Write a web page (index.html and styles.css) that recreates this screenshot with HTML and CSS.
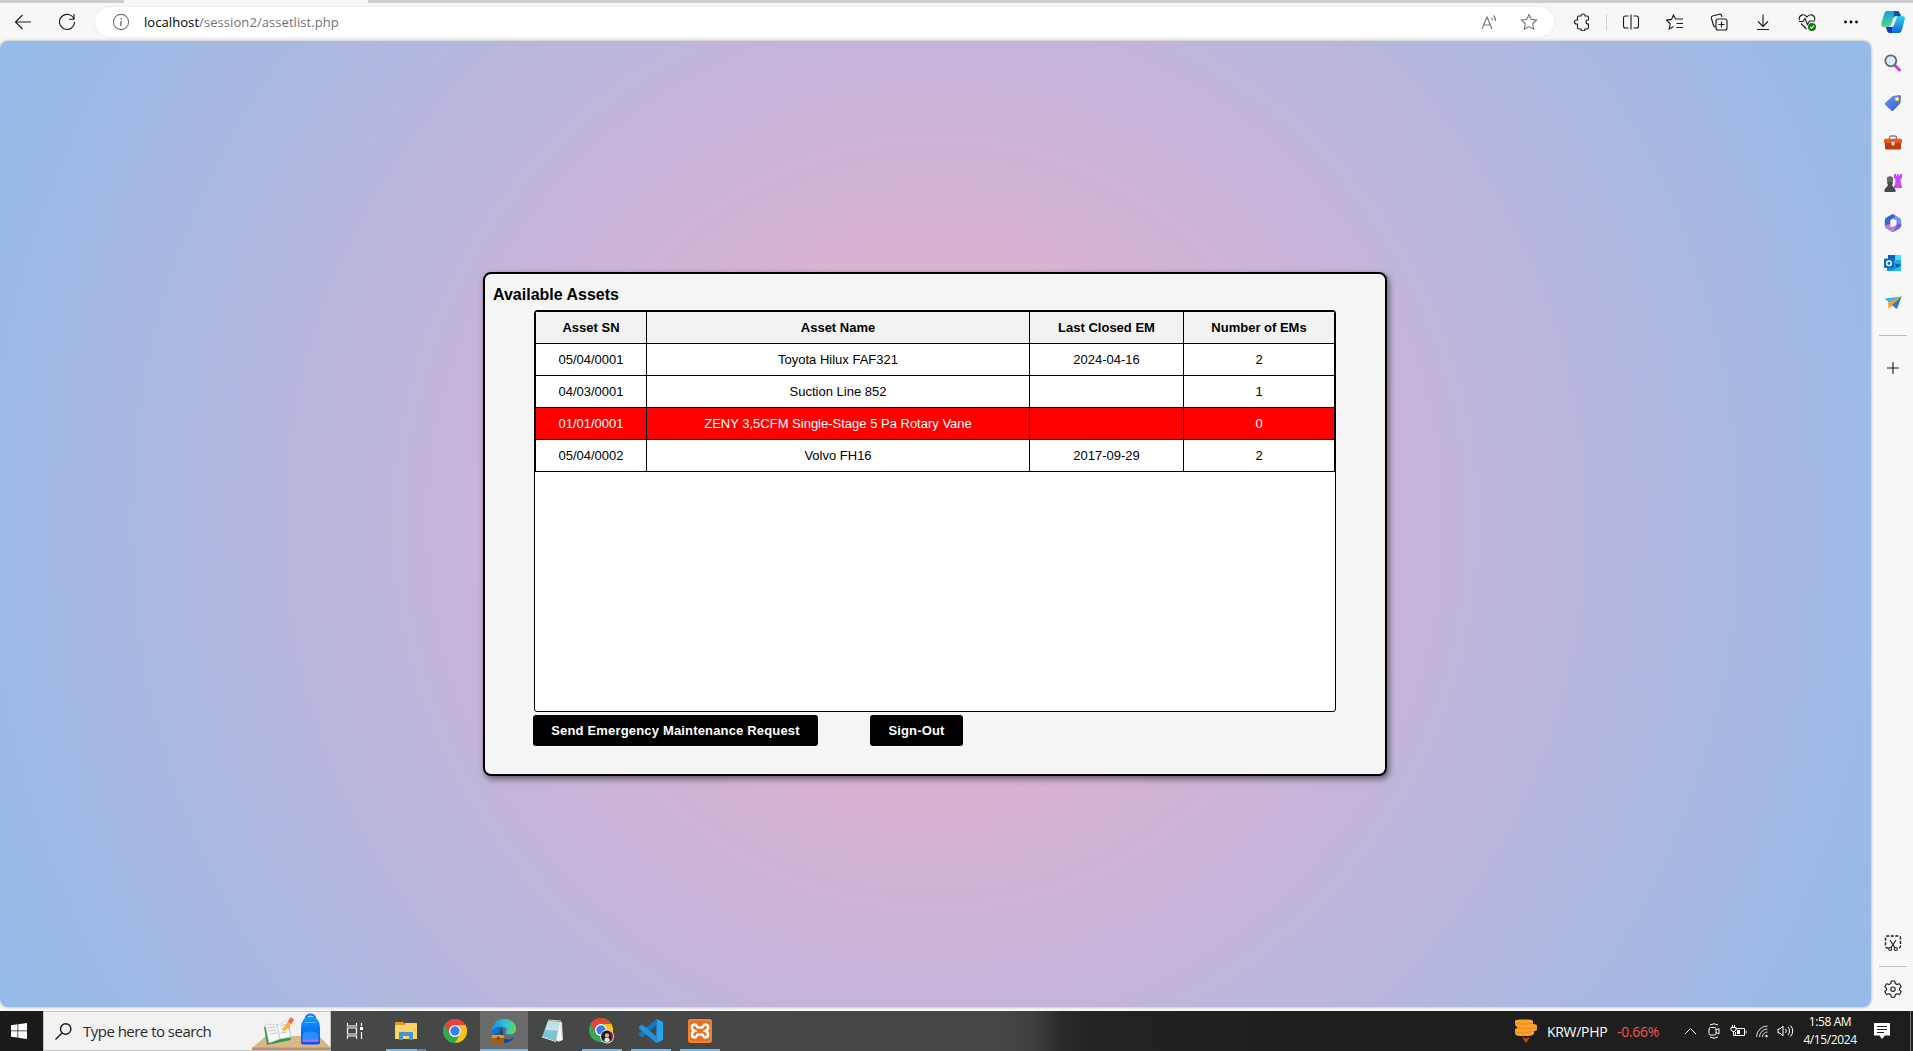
FILE: index.html
```html
<!DOCTYPE html>
<html lang="en">
<head>
<meta charset="utf-8">
<title>Available Assets</title>
<link rel="stylesheet" href="styles.css">
</head>
<body>
<div class="tabstrip"><span class="active-tab"></span></div>
<header class="toolbar">
  <span class="slot nav"><svg width="18" height="18" viewBox="0 0 18 18" class="line"><path d="M17 9H1.5M8.5 2 1.5 9l7 7"/></svg></span>
  <span class="slot nav"><svg width="18" height="18" viewBox="0 0 18 18" class="line"><path d="M16 6.2A7.5 7.5 0 1 0 16.5 9M16 1v5.2h-5"/></svg></span>
  <div class="address">
    <svg width="18" height="18" viewBox="0 0 18 18" class="line muted"><circle cx="9" cy="9" r="7.6"/><path d="M9 8v5M9 5v1.4" stroke-width="1.5"/></svg>
    <p class="url">localhost<span>/session2/assetlist.php</span></p>
    <span class="addr-icon"><svg width="17" height="17" viewBox="0 0 17 17" class="line muted"><path d="M1 15 6 3l5 12M2.800 11h6.600M10.500 3.500a4 4 0 0 1 1 3M12.500 1.500a7 7 0 0 1 2 5.500"/></svg></span>
    <span class="addr-icon"><svg width="18" height="18" viewBox="0 0 18 18" class="line muted"><path d="m9 1.5 2.3 4.9 5.3.7-3.9 3.7 1 5.4L9 13.6l-4.7 2.6 1-5.4L1.4 7.100l5.3-.7z"/></svg></span>
  </div>
  <span class="slot"><svg width="18" height="18" viewBox="0 0 18 18" class="line"><path d="M4.500 4.500Q4.500 3 6 3H8a2 2 0 0 1 4 0h2q1.500 0 1.500 1.500V7H15a2 2 0 0 0 0 4h.5v3.500q0 1.500-1.500 1.500h-2a2 2 0 0 1-4 0H6q-1.500 0-1.500-1.500V11H3.500a2 2 0 0 1 0-4h1z"/></svg></span>
  <i class="sep"></i>
  <span class="slot"><svg width="18" height="18" viewBox="0 0 18 18" class="line"><path d="M6.500 3H3.500Q1.500 3 1.500 5v8q0 2 2 2h3M11.500 3h3q2 0 2 2v8q0 2-2 2h-3M9 1.500v15"/></svg></span>
  <span class="slot"><svg width="18" height="18" viewBox="0 0 18 18" class="line"><path d="M9.500 6 7.500 2 5.500 6.400l-5 .7 3.700 3.700-1 5.200 4.300-2.500M7.500 2l2 4h7.500M10.500 10.500h6.500M10.500 14.500h6.500"/></svg></span>
  <span class="slot"><svg width="18" height="18" viewBox="0 0 18 18" class="line"><rect x="6" y="6" width="11" height="11" rx="2"/><path d="M11.500 8.500v6M8.500 11.500h6M3.500 12.500 1.300 5Q1 3.500 2.500 3L9.500 1.200q1.500-.3 2 1.300l.5 1.500M3.500 12.500q.5 1.500 2 1.500"/></svg></span>
  <span class="slot"><svg width="18" height="18" viewBox="0 0 18 18" class="line"><path d="M9 1.500v11.500M4 8.500l5 5 5-5M3 16.500h12"/></svg></span>
  <span class="slot"><svg width="18" height="18" viewBox="0 0 18 18" class="line"><path d="M1.500 7C0 2.500 6-.5 9 4c3-4.500 9-1.500 7.500 3M1 8.500h4l2-3 2.500 6 2-3.500H17M3 10.500l5.500 5.500"/><circle cx="14" cy="14" r="4" fill="#107c10" stroke="none"/><path d="m12.200 14 1.300 1.300 2.400-2.600" stroke="#fff"/></svg></span>
  <span class="slot"><svg width="18" height="18" viewBox="0 0 18 18"><circle cx="3.500" cy="9" r="1.400"/><circle cx="9" cy="9" r="1.400"/><circle cx="14.500" cy="9" r="1.400"/></svg></span>
  <span class="slot copilot"><svg width="24" height="22" viewBox="0 0 24 22"><defs><linearGradient id="cp1" x2=".3" y2="1"><stop stop-color="#1693dc"/><stop offset=".6" stop-color="#2cc5b0"/><stop offset="1" stop-color="#6bd178"/></linearGradient><linearGradient id="cp2" x2="0" y2="1"><stop stop-color="#34cfe8"/><stop offset="1" stop-color="#0f66e0"/></linearGradient></defs><path d="M6 0h10q2 0 2.700 2L20 5h-5q-2 0-3 3l-1.500 5q-1 3-3.500 3H3q-3.500 0-2.600-4L3.500 2Q4.200 0 6 0z" fill="url(#cp1)"/><path d="M13 0h3q2 0 2.700 2L20 5h-5q-2 0-2.500 2z" fill="#144fae"/><path d="M18 22H9q-2 0-2.700-2L5 16h4q2 0 3-3l1.500-5q1-3 3.500-3h4q3.700 0 2.600 4L20.500 20q-.7 2-2.500 2z" fill="url(#cp2)"/><path d="M5 16h4q2 0 2.700-2L10.500 22H9q-2 0-2.700-2z" fill="#1634c8"/><path d="M12.500 8q.8-2 2.500-2h1l-3 8q-.8 2-2.500 2h-1z" fill="#fff"/></svg></span>
</header>

<div class="browser">
  <main class="page">
    <section class="card">
      <h1>Available Assets</h1>
      <div class="table-box">
        <table>
          <colgroup><col class="c-sn"><col class="c-name"><col class="c-closed"><col class="c-num"></colgroup>
          <thead><tr><th>Asset SN</th><th>Asset Name</th><th>Last Closed EM</th><th>Number of EMs</th></tr></thead>
          <tbody>
            <tr><td>05/04/0001</td><td>Toyota Hilux FAF321</td><td>2024-04-16</td><td>2</td></tr>
            <tr><td>04/03/0001</td><td>Suction Line 852</td><td></td><td>1</td></tr>
            <tr class="selected"><td>01/01/0001</td><td>ZENY 3,5CFM Single-Stage 5 Pa Rotary Vane</td><td></td><td>0</td></tr>
            <tr><td>05/04/0002</td><td>Volvo FH16</td><td>2017-09-29</td><td>2</td></tr>
          </tbody>
        </table>
      </div>
      <div class="actions">
        <button class="send">Send Emergency Maintenance Request</button>
        <button class="signout">Sign-Out</button>
      </div>
    </section>
  </main>
  <aside class="sidebar">
    <span class="side"><svg width="18" height="18" viewBox="0 0 18 18"><path d="m10.500 11 5 5" stroke="#c43cf0" stroke-width="3" stroke-linecap="round"/><circle cx="6.800" cy="6.800" r="5.500" fill="#d3efff" stroke="#666" stroke-width="1.800"/></svg></span>
    <span class="side"><svg width="18" height="18" viewBox="0 0 18 18"><defs><linearGradient id="tag" x2="1" y2="1"><stop stop-color="#5d9cff"/><stop offset="1" stop-color="#4453d6"/></linearGradient></defs><path d="M9 2l6.500-1q1.500 0 1.500 1.500L16.500 9 9.500 16.500q-1 1-2.200 0L1.300 11q-1-1 0-2.200z" fill="url(#tag)"/><circle cx="13" cy="5" r="1.700" fill="#fff" stroke="#f6c52c" stroke-width="1.300"/></svg></span>
    <span class="side"><svg width="18" height="18" viewBox="0 0 18 18"><path d="M5.500 5V3.500q0-1.500 1.500-1.500h4q1.500 0 1.500 1.500V5" fill="none" stroke="#858585" stroke-width="1.500"/><path d="M1.500 4.800h15q1.500 0 1.500 1.500V9H0V6.300q0-1.500 1.500-1.500z" fill="#e85a20"/><path d="M1 9h16v5q0 1.500-1.500 1.500h-13Q1 15.500 1 14z" fill="#bd3b10"/><rect x="7.300" y="7.500" width="3.400" height="4" rx="1.500" fill="#ddd"/></svg></span>
    <span class="side"><svg width="18" height="18" viewBox="0 0 18 18"><path d="M10 0h2v1.500h1.200V0h1.600v1.500H16V0h2v4l-1.500 1.500.5 5 1 1.500v2h-8V12l1-1.500.5-5L10 4z" fill="#c44bf5"/><circle cx="6" cy="5.500" r="3.200" fill="#666"/><path d="M3 8h6v1.500H8q0 3 2 4l1.500 2V18H.5v-2.500l1.500-2q2-1 2-4H3z" fill="#484848"/></svg></span>
    <span class="side"><svg width="18" height="18" viewBox="0 0 18 18"><path d="M8 .3 2.500 3.500Q.8 4.500.8 6.200v5.600q0 1.700 1.700 2.600l3.700-2V7.500q0-1.300 1.300-2.200L12 2.800 10 .6Q9-.3 8 .3z" fill="#3b65c8"/><path d="m10 .6 5.500 3.200q1.700 1 1.700 2.500v5.900L12.500 9.500V6.500L8.500 4.700l3.500-2z" fill="#7894ef"/><path d="m2.500 14.400 5 3q1.500.8 3 0l5-3q1.700-1 1.700-2.300v-2.200l-4.700-.4v1.500L9.500 13z" fill="#6f62d8"/><path d="m.8 11.500 5.400-1.500v2.400l3.500 1 2.800-1.900-3 6-2-.1-5-3Q.8 13.500.8 11.500z" fill="#bb80d9"/></svg></span>
    <span class="side"><svg width="18" height="18" viewBox="0 0 18 18"><path d="M4 1h13v9H4z" fill="#28a8ea"/><path d="M4 1h7v5H4z" fill="#0364b8"/><path d="M11 1h6v5h-6z" fill="#50d9ff"/><path d="M3 9h7l7 1v7H3z" fill="#1490df"/><path d="m8 17 9-6v6z" fill="#28c3f0"/><path d="m11 10 6 1-3.500 3z" fill="#0a4f96"/><rect y="4.500" width="10" height="9.500" rx="1" fill="#0f6cbd"/><circle cx="5" cy="9.200" r="2.300" fill="none" stroke="#fff" stroke-width="1.500"/></svg></span>
    <span class="side"><svg width="18" height="18" viewBox="0 0 18 18"><path d="M.5 4.500 17.500 2.500 6 9.500z" fill="#43b5f2"/><path d="M17.500 2.500 13 14.500 9 11z" fill="#2464d8"/><path d="M17.500 2.500 4 9l.5 5.500L8 12z" fill="#f7a41d"/><path d="M17.500 2.500 8 11l4.500 4z" fill="#2878e3"/></svg></span>
    <i class="rule"></i>
    <span class="side"><svg width="18" height="18" viewBox="0 0 18 18" class="line"><path d="M9 3v12M3 9h12"/></svg></span>
    <span class="grow"></span>
    <span class="side"><svg width="18" height="18" viewBox="0 0 18 18" class="line"><path d="M4.500 14H3.500Q1.500 14 1.500 12V4q0-2 2-2h11q2 0 2 2v8q0 2-2 2h-1" stroke-width="1.400" stroke-dasharray="3 1.500"/><path d="m6 6 5 8M12 6l-5 8"/><circle cx="6.200" cy="15" r="1.500"/><circle cx="11.800" cy="15" r="1.500"/></svg></span>
    <i class="rule low"></i>
    <span class="side"><svg width="18" height="18" viewBox="0 0 18 18" class="line"><path d="M7.300 1h3.400l.6 2.500 1.700 1 2.500-.8 1.700 3L15.400 8.500v1.400l1.800 1.600-1.700 3-2.500-.8-1.700 1-.6 2.500H7.300l-.6-2.500-1.700-1-2.500.8-1.700-3 1.800-1.600V8.500L.8 6.700l1.700-3 2.500.8 1.700-1z" stroke-linejoin="round"/><circle cx="9" cy="9.200" r="2.200"/></svg></span>
  </aside>
</div>

<footer class="taskbar">
  <span class="start"><svg width="16" height="16" viewBox="0 0 16 16" fill="#fff"><path d="M0 2.200 6.500 1.300v6.300H0zM7.200 1.200 16 0v7.600H7.200zM0 8.300h6.500v6.300L0 13.700zM7.200 8.300H16V16l-8.800-1.200z"/></svg></span>
  <div class="search">
    <svg width="17" height="17" viewBox="0 0 17 17" class="line"><circle cx="10.700" cy="6" r="5.200" stroke-width="1.400"/><path d="m7 10-6.500 6.500" stroke-width="1.400"/></svg>
    <p>Type here to search</p>
    <svg class="scene" width="79" height="38" viewBox="0 0 79 38"><defs><linearGradient id="bag" x2="0" y2="1"><stop stop-color="#0a9cff"/><stop offset="1" stop-color="#0650e8"/></linearGradient></defs><path d="M14 24h53l12 12H0z" fill="#dcb68b"/><path d="M0 35.500h79V38H0z" fill="#bd9268"/><g transform="translate(1 1)"><path d="m11 14 25-4 2 17-24 5z" fill="#2c9b43"/><path d="m12 11 12 1 10-4 4 16-11 2-11 4z" fill="#f8f8f8" stroke="#c7c7c7" stroke-width=".6"/><path d="m24 12 3 14M15 15l7-1M16 18l7-1M17 21l7-1M27 13l7-2M28 16l7-2M28 20l6-1" stroke="#aaa" stroke-width=".7"/><path d="m29 19 2-5 5-6 3 2-6 7z" fill="#ffb02e"/><path d="m35 8 3-4 3 3-3 4z" fill="#f5634f"/></g><g transform="translate(.5 1.500)"><path d="M53 5q1-4 5-4t5 4" fill="none" stroke="#1680e8" stroke-width="2"/><path d="M48.500 14Q49 3 58 3t9.500 11v15q0 2-2 2h-15q-2 0-2-2z" fill="url(#bag)"/><path d="M50 22q0-4 8-4t8 4v5H50z" fill="#2b8eff"/><path d="M50 26h16v2.500H50z" fill="#a46bea"/><path d="M52 9h12" stroke="#51b8ff"/></g></svg>
  </div>
  <div class="apps">
    <span class="view"><svg width="18" height="16" viewBox="0 0 18 16" fill="none" stroke="#fff" stroke-width="1.200"><path d="M1.500 0v3h9V0M1.500 16v-3h9v3M1.500 5h9v6h-9zM15.500 0v3M15.500 9v7"/><path d="M14 4h3v3h-3z" fill="#fff" stroke="none"/></svg></span>
    <span class="app"><svg width="22" height="20" viewBox="0 0 22 20"><path d="M0 2Q0 1 1 1h7l2 2v4H0z" fill="#e09c13"/><path d="M10 2h11q1 0 1 1v4H10zM0 4h22v14H0z" fill="#ffd264"/><path d="M4 19v-7q0-1 1-1h12q1 0 1 1v7h-4v-4H8v4z" fill="#3d94d8"/></svg><b class="run files"></b></span>
    <span class="app"><svg width="24" height="24" viewBox="0 0 24 24"><g id="chrome"><circle cx="12" cy="12" r="12" fill="#34a853"/><path d="M1.600 6A12 12 0 0 1 22.400 6H12a6 6 0 0 0-5.200 9z" fill="#ea4335"/><path d="M22.400 6A12 12 0 0 1 12 24l5.200-9A6 6 0 0 0 17 8.500L15 6z" fill="#fbc116"/><circle cx="12" cy="12" r="6" fill="#fff"/><circle cx="12" cy="12" r="4.700" fill="#3b7ded"/></g></svg></span>
    <span class="app current"><svg width="24" height="24" viewBox="0 0 24 24"><defs><linearGradient id="ed"><stop stop-color="#1991db"/><stop offset=".55" stop-color="#28c3df"/><stop offset="1" stop-color="#63dc57"/></linearGradient></defs><path d="M0 12C0 5 5 0 12 0c7 0 12 4.500 12 9.500 0 4-3 6-6 6-3.500 0-5-1-4-2.500 1.500-2 1-5-3-5C5 8 1 10 0 14z" fill="url(#ed)"/><path d="M0 12q3-5 10-4.500Q6.500 11 8.500 16q2 4 7 4.500 4 0 7-3Q19 24 12 24 0 24 0 12z" fill="#1c6fc4"/><path d="M10 8q-4 3-1.500 8 2.500 4.500 7 4.500 4 0 7-3Q19 24 12 24v-8z" fill="#124b98"/><path d="M11.500 9q2.500 1 2 4-1 2 1.500 2.500l-2 2q-3-3-1.500-8.500z" fill="#6b6b6b"/><path d="M0 16h12v8H0z" fill="#a65b0b"/><path d="M0 16h12v3H0z" fill="#e19a27"/><path d="M3.500 16v-1.500h5V16M5.500 18h1.500v2H5.500z" stroke="#70400b" fill="none"/></svg><b class="run full"></b></span>
    <span class="app"><svg width="24" height="24" viewBox="0 0 24 24"><path d="m7 2 14 1 1 18-5 2z" fill="#e6e2d4"/><path d="m7 2 12 1-4 19-14-4z" fill="#7fc4d0"/><path d="m7 2 12 1-2 9-13-1z" fill="#bfe2e6"/><path d="m19 3-4 19 6-1z" fill="#f7f7f4"/><path d="m7 1 13 1" stroke="#d9d9d9"/><path d="m1 18 14 4.500" stroke="#e5eeee"/></svg></span>
    <span class="app"><svg width="26" height="26" viewBox="0 0 26 26"><use href="#chrome"/><circle cx="18" cy="18.500" r="7" fill="#e8e1d2"/><circle cx="18" cy="18.500" r="6" fill="#17224b"/><path d="M20 13q5 2 4 7l-3 3z" fill="#a41f2c"/><path d="M14 19q0-6 4-6t4 6l-1 5h-6z" fill="#1b1717"/><circle cx="18" cy="17.500" r="2.300" fill="#dfaa94"/><path d="m15 23 1-3h4l1 3-3 1.500z" fill="#ddd"/></svg><b class="run"></b></span>
    <span class="app"><svg width="24" height="24" viewBox="0 0 24 24"><path d="M17.500 0 24 3v18l-6.500 3z" fill="#22a5f1"/><path d="M17.500 0v6.500L3 18.500 0 16.500v-2z" fill="#1277bd"/><path d="M17.500 24v-6.500L3 5.500 0 7.500v2z" fill="#1f94dc"/></svg><b class="run"></b></span>
    <span class="app"><svg width="24" height="24" viewBox="0 0 24 24"><rect width="24" height="24" rx="2" fill="#e8701d"/><rect x="1" y="1" width="22" height="22" rx="2" fill="none" stroke="#f6a064" stroke-width=".8"/><path d="M10 8.500h4c1.500 0 1-3 3.200-3 3.800 0 3.800 5 .3 6.500 3.500 1.500 3.500 6.500-.3 6.500-2.200 0-1.700-3-3.200-3h-4c-1.500 0-1 3-3.200 3C3 18.500 3 13.500 6.500 12 3 10.500 3 5.500 6.800 5.500 9 5.500 8.500 8.500 10 8.500z" fill="none" stroke="#fff" stroke-width="2.500"/></svg><b class="run"></b></span>
  </div>
  <div class="tray">
    <span class="ticker"><svg width="24" height="24" viewBox="0 0 24 24"><path d="M1 2Q1 .5 6 .5h9q4 0 4 2V5q4 0 4 2v3q0 2-3 2v2q0 3-6 3H6q-5 0-5-3v-3q0-2 3-2Q1 7 1 5z" fill="#f8a12b"/><path d="M1 4q6 2 17 .5M5 9q8 2 17-.5M1 13q8 2 18-.5" stroke="#e58a1a" fill="none"/><path d="m8 18 4 1.500 4-1.500-4 6z" fill="#d94316"/></svg><span class="pair">KRW/PHP</span><span class="down">-0.66%</span></span>
    <span class="tray-icon chev"><svg width="13" height="8" viewBox="0 0 13 8" class="line light"><path d="m1 7 5.500-5.500L12 7"/></svg></span>
    <span class="tray-icon"><svg width="12" height="16" viewBox="0 0 12 16" class="line light"><rect x="1" y="4.500" width="7" height="7.500" rx="1.500"/><path d="m8 7 3-1.500v5.500L8 9.500M2 2q4-2.500 8 0M2 14q4 2.500 8 0"/></svg></span>
    <span class="tray-icon"><svg width="17" height="14" viewBox="0 0 17 14" class="line light"><path d="M6 4.500h8.500v7h-9V8M16 6.500v3M2.500 1v2.500M4.500 1v2.500M1 3.500h5V6Q5.500 7.500 3.500 7.500T1 6zM3.500 7.500v4h2"/><path d="M7 6h3v4H7z" fill="#fff" stroke="none"/></svg></span>
    <span class="tray-icon"><svg width="14" height="14" viewBox="0 0 14 14" class="line light"><g opacity=".85"><path d="M1.500 13A11 11 0 0 1 12.500 2M4.500 13a8 8 0 0 1 8-8M7.500 13a5 5 0 0 1 5-5"/></g><circle cx="11.500" cy="12" r="1.200" fill="#fff" stroke="none"/></svg></span>
    <span class="tray-icon vol"><svg width="17" height="14" viewBox="0 0 17 14" class="line light"><path d="M1 5h2l3-3v10L3 9H1zM8.500 5a3 3 0 0 1 0 4M11 3a6 6 0 0 1 0 8M13.500 1.500a8 8 0 0 1 0 11"/></svg></span>
    <time class="clock"><span class="hour">1:58 AM</span><span class="date">4/15/2024</span></time>
    <span class="notes"><svg width="16" height="16" viewBox="0 0 16 16"><path d="M0 0h16v12.500h-5L8 16l-2.500-3.500H0z" fill="#fff"/><path d="M3 3.500h10M3 6.500h10M3 9.500h7" stroke="#1d1d1d"/></svg></span>
    <i class="peek"></i>
  </div>
</footer>
</body>
</html>
```
FILE: styles.css
```css
* { box-sizing: border-box; }
body {
  margin: 0;
  width: 1913px;
  height: 1051px;
  overflow: hidden;
  display: flex;
  flex-direction: column;
  background: #f7f7f7;
  font-family: "Open Sans", "Noto Sans", sans-serif;
}
p, h1 { margin: 0; }
svg { display: block; flex: none; }
.line { fill: none; stroke: #1a1a1a; stroke-width: 1.1; }
.line.muted { stroke: #747474; }
.line.light { stroke: #fff; stroke-width: 1; }

/* browser chrome */
.tabstrip { height: 3px; flex: none; background: #cdcdcd; padding-left: 124px; }
.active-tab { display: block; width: 244px; height: 3px; background: #f7f7f7; }
.toolbar { height: 38px; flex: none; display: flex; align-items: center; padding: 0 0 0 1px; }
.slot { width: 44px; flex: none; display: flex; justify-content: center; }
.slot.copilot { width: 40px; }
.nav:nth-child(2) { margin-right: 6px; }
.address {
  width: 1459px;
  height: 30px;
  flex: none;
  margin-right: 6px;
  padding: 0 5px 0 17px;
  border-radius: 15px;
  background: #fff;
  box-shadow: 0 0 3px rgba(0, 0, 0, .08);
  display: flex;
  align-items: center;
}
.url { flex: 1; margin-left: 14px; font-size: 13px; letter-spacing: .07px; color: #000; white-space: nowrap; }
.url span { color: #747474; }
.addr-icon { width: 40px; display: flex; justify-content: center; }
.sep { width: 1px; height: 16px; flex: none; margin: 0 2px; background: #cfcfcf; }

.browser { height: 966px; flex: none; display: flex; }
.page {
  width: 1871px;
  border-radius: 8px;
  background: radial-gradient(circle, rgb(238, 174, 202) 0%, rgb(148, 187, 233) 100%);
  box-shadow: 0 0 3px rgba(0, 0, 0, .35);
  display: flex;
  align-items: center;
  justify-content: center;
  font-family: "Liberation Sans", Arial, sans-serif;
}
.sidebar { width: 42px; display: flex; flex-direction: column; align-items: center; padding: 2px 0 0 2px; }
.side { height: 40px; flex: none; display: flex; align-items: center; }
.rule { width: 28px; height: 1px; flex: none; margin: 12px 0 12px; background: #bdbdbd; }
.rule.low { margin: 3px 0 2px; }
.grow { flex: 1; }
.sidebar .side:last-child { margin-bottom: -2px; }

/* asset card */
.card {
  width: 904px;
  height: 504px;
  margin-right: 1px;
  padding: 11px 8px 9px;
  border: 2px solid #000;
  border-radius: 8px;
  background: #f5f5f5;
  box-shadow: 2px 3px 6px rgba(0, 0, 0, .5);
}
h1 { font-size: 16px; line-height: 20px; }
.table-box {
  width: 802px;
  height: 402px;
  margin: 5px 0 0 41px;
  border: 1px solid #000;
  border-radius: 3px;
  background: #fff;
  overflow: hidden;
}
table { width: 800px; border-collapse: collapse; table-layout: fixed; font-size: 13px; }
.c-sn { width: 111px; }
.c-name { width: 383px; }
.c-closed { width: 154px; }
.c-num { width: 151px; }
th, td { height: 32px; padding: 0; border: 1px solid #000; text-align: center; vertical-align: middle; }
th { background: #f2f2f2; }
.selected { background: #f00; color: #fff; }
.actions { display: flex; gap: 52px; margin: 3px 0 0 40px; }
button {
  height: 31px;
  padding: 0;
  border: 0;
  border-radius: 3px;
  background: #000;
  color: #fff;
  font: bold 13px "Liberation Sans", Arial, sans-serif;
  letter-spacing: .17px;
  white-space: nowrap;
}
.send { width: 285px; }
.signout { width: 93px; }

/* system taskbar */
.taskbar {
  height: 40px;
  flex: none;
  margin-top: 4px;
  display: flex;
  background: linear-gradient(90deg, #474747 331px, #454747 1000px, #3f4141 1032px, #2a2a29 1060px, #232322 1090px, #1e1e1e 1300px);
  color: #fff;
}
.start { width: 43px; display: flex; align-items: center; padding-left: 11px; background: #1b1b1b; }
.search { width: 288px; display: flex; align-items: center; border: 1px solid #c2c2c2; background: #f2f2f2; padding-left: 11px; }
.search p { flex: 1; margin-left: 11px; font-size: 15px; color: #2a2a2a; white-space: nowrap; letter-spacing: -.52px; }
.scene { margin-right: -1px; }
.apps { display: flex; }
.view { width: 51px; display: flex; align-items: center; padding-left: 15px; }
.app { width: 49px; padding-right: 2px; position: relative; display: flex; align-items: center; justify-content: center; }
.current { width: 48px; margin-right: 1px; padding-right: 0; background: #6b6b6b; }
.run { position: absolute; left: 4px; right: 5px; bottom: 0; height: 2px; background: #76b9ed; }
.run.full { left: 0; right: 0; }
.run.files { background: linear-gradient(90deg, #76b9ed 31px, #5586b0 31px); }
.tray { margin-left: auto; display: flex; align-items: center; }
.ticker { display: flex; align-items: center; font-size: 14px; }
.pair { width: 70px; margin-left: 9px; white-space: nowrap; letter-spacing: -.3px; }
.down { width: 61px; color: #ef5753; white-space: nowrap; letter-spacing: -.3px; }
.tray-icon { width: 24px; display: flex; justify-content: center; }
.tray-icon.vol { width: 23px; }
.clock { width: 66px; display: flex; flex-direction: column; align-items: center; font-size: 12px; line-height: 18px; letter-spacing: -.4px; white-space: nowrap; }
.notes { width: 37px; display: flex; justify-content: center; }
.peek { width: 1px; height: 40px; margin: 0 2px 0 10px; background: #777; }
```
